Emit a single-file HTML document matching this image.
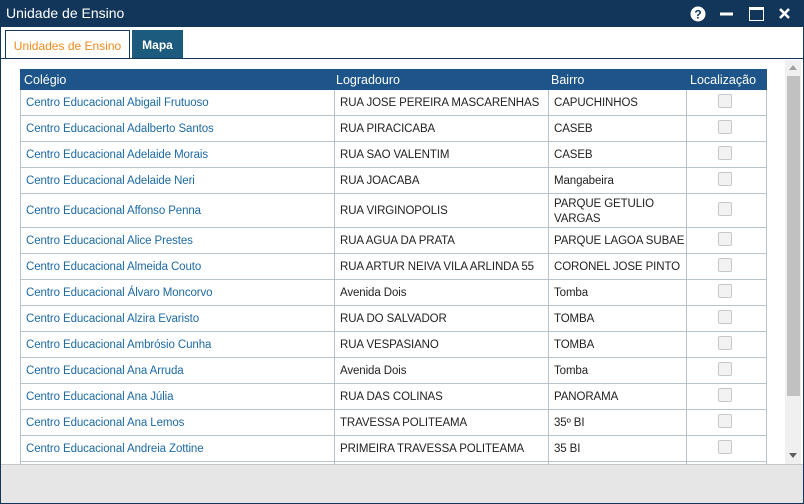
<!DOCTYPE html>
<html><head><meta charset="utf-8"><style>
*{margin:0;padding:0;box-sizing:border-box}
body{width:804px;height:504px;overflow:hidden;background:#fff;font-family:"Liberation Sans",sans-serif;position:relative}
.win{position:absolute;left:0;top:0;width:804px;height:504px;border:1px solid #12355a;border-top:none}
.title{position:absolute;left:0;top:0;width:804px;height:27px;background:#12355a;color:#fff;font-size:14px;line-height:27px;padding-left:6px}
.tab1{position:absolute;left:5px;top:30px;width:125px;height:29px;border:1px solid #12355a;border-bottom:none;background:#fff;color:#f08a1c;font-size:12px;line-height:30px;text-align:center}
.tab2{position:absolute;left:132px;top:30px;width:51px;height:28px;background:#1c5a7e;color:#fff;font-size:12px;font-weight:bold;line-height:30px;text-align:center}
.line{position:absolute;left:0;top:58px;width:804px;height:1px;background:#12355a}
.hd{position:absolute;left:20px;top:69px;width:747px;height:21px;background:#1d5489;color:#fff;font-size:12.5px;line-height:22px}
.hd span{position:absolute;top:0}
.r{position:absolute;left:20px;width:747px;border-bottom:1px solid #b8c4cc;font-size:11.5px;color:#222;letter-spacing:-0.1px}
.r div{position:absolute;top:0;height:100%;display:flex;align-items:center;padding-left:5px;padding-top:2px;line-height:15px;white-space:nowrap;overflow:hidden}
.c1{left:0;width:314px;color:#1d6aa5;border-left:1px solid #b8c4cc}
.c2{left:314px;width:214px;border-left:1px solid #b8c4cc}
.c3{left:528px;width:138px;border-left:1px solid #b8c4cc}
.c4{left:666px;width:81px;border-left:1px solid #b8c4cc;border-right:1px solid #b8c4cc}
.cb{position:absolute;left:31px;top:4px;width:14px;height:14px;border:1px solid #c8c8c8;border-radius:2px;background:#f2f2f2}
.foot{position:absolute;left:1px;top:464px;width:802px;height:39px;background:#e6e6e6;border-top:1px solid #c8c8c8}
.sb{position:absolute;left:785px;top:60px;width:16px;height:404px;background:#f0f0f0}
.th{position:absolute;left:787px;top:76px;width:13px;height:320px;background:#c1c1c1}
</style></head><body>
<div class="title">Unidade de Ensino</div>
<svg style="position:absolute;left:690px;top:6px" width="100" height="16">
<circle cx="8" cy="8" r="7.5" fill="#fff"/><text x="8" y="12.5" font-size="12" font-weight="bold" text-anchor="middle" fill="#12355a" font-family="Liberation Sans">?</text>
<rect x="30" y="6.5" width="13" height="3" fill="#fff"/>
<rect x="59.5" y="1.5" width="14" height="13" fill="none" stroke="#fff" stroke-width="1"/><rect x="59.5" y="1.5" width="14" height="2.5" fill="#fff"/>
<path d="M90 3 L99 12 M99 3 L90 12" stroke="#fff" stroke-width="2.6"/>
</svg>
<div class="tab1">Unidades de Ensino</div>
<div class="tab2">Mapa</div>
<div class="line"></div>
<div class="hd"><span style="left:4px">Colégio</span><span style="left:316px">Logradouro</span><span style="left:531px">Bairro</span><span style="left:670px">Localização</span></div>
<div class="r" style="top:90px;height:26px"><div class="c1">Centro Educacional Abigail Frutuoso</div><div class="c2">RUA JOSE PEREIRA MASCARENHAS</div><div class="c3">CAPUCHINHOS</div><div class="c4"><span class="cb"></span></div></div>
<div class="r" style="top:116px;height:26px"><div class="c1">Centro Educacional Adalberto Santos</div><div class="c2">RUA PIRACICABA</div><div class="c3">CASEB</div><div class="c4"><span class="cb"></span></div></div>
<div class="r" style="top:142px;height:26px"><div class="c1">Centro Educacional Adelaide Morais</div><div class="c2">RUA SAO VALENTIM</div><div class="c3">CASEB</div><div class="c4"><span class="cb"></span></div></div>
<div class="r" style="top:168px;height:26px"><div class="c1">Centro Educacional Adelaide Neri</div><div class="c2">RUA JOACABA</div><div class="c3">Mangabeira</div><div class="c4"><span class="cb"></span></div></div>
<div class="r" style="top:194px;height:34px"><div class="c1">Centro Educacional Affonso Penna</div><div class="c2">RUA VIRGINOPOLIS</div><div class="c3" style="white-space:normal">PARQUE GETULIO<br>VARGAS</div><div class="c4"><span class="cb" style="top:8px"></span></div></div>
<div class="r" style="top:228px;height:26px"><div class="c1">Centro Educacional Alice Prestes</div><div class="c2">RUA AGUA DA PRATA</div><div class="c3">PARQUE LAGOA SUBAE</div><div class="c4"><span class="cb"></span></div></div>
<div class="r" style="top:254px;height:26px"><div class="c1">Centro Educacional Almeida Couto</div><div class="c2">RUA ARTUR NEIVA VILA ARLINDA 55</div><div class="c3">CORONEL JOSE PINTO</div><div class="c4"><span class="cb"></span></div></div>
<div class="r" style="top:280px;height:26px"><div class="c1">Centro Educacional Álvaro Moncorvo</div><div class="c2">Avenida Dois</div><div class="c3">Tomba</div><div class="c4"><span class="cb"></span></div></div>
<div class="r" style="top:306px;height:26px"><div class="c1">Centro Educacional Alzira Evaristo</div><div class="c2">RUA DO SALVADOR</div><div class="c3">TOMBA</div><div class="c4"><span class="cb"></span></div></div>
<div class="r" style="top:332px;height:26px"><div class="c1">Centro Educacional Ambrósio Cunha</div><div class="c2">RUA VESPASIANO</div><div class="c3">TOMBA</div><div class="c4"><span class="cb"></span></div></div>
<div class="r" style="top:358px;height:26px"><div class="c1">Centro Educacional Ana Arruda</div><div class="c2">Avenida Dois</div><div class="c3">Tomba</div><div class="c4"><span class="cb"></span></div></div>
<div class="r" style="top:384px;height:26px"><div class="c1">Centro Educacional Ana Júlia</div><div class="c2">RUA DAS COLINAS</div><div class="c3">PANORAMA</div><div class="c4"><span class="cb"></span></div></div>
<div class="r" style="top:410px;height:26px"><div class="c1">Centro Educacional Ana Lemos</div><div class="c2">TRAVESSA POLITEAMA</div><div class="c3">35º BI</div><div class="c4"><span class="cb"></span></div></div>
<div class="r" style="top:436px;height:26px"><div class="c1">Centro Educacional Andreia Zottine</div><div class="c2">PRIMEIRA TRAVESSA POLITEAMA</div><div class="c3">35 BI</div><div class="c4"><span class="cb"></span></div></div>
<div class="r" style="top:462px;height:26px"><div class="c1"></div><div class="c2"></div><div class="c3"></div><div class="c4"></div></div>
<div class="sb"></div><div class="th"></div>
<svg style="position:absolute;left:788px;top:64px" width="10" height="400"><path d="M1 6 L9 6 L5 1Z" fill="#a0a0a0"/><path d="M1 389 L9 389 L5 394Z" fill="#606060"/></svg>
<div class="foot"></div>
<div class="win"></div>
</body></html>
